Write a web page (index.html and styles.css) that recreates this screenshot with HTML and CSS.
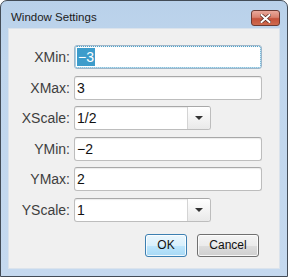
FILE: index.html
```html
<!DOCTYPE html>
<html lang="en">
<head>
    <meta charset="utf-8">
    <title>Window Settings</title>
    <link rel="stylesheet" href="styles.css">
</head>
<body>
    <div class="window">
        <div class="titlebar">
            <span class="title">Window Settings</span>
            <div class="close">
                <svg width="11" height="9" viewBox="0 0 11 9">
                    <path d="M1.5 1 L9.5 8 M9.5 1 L1.5 8" stroke="#5a2a22" stroke-width="3.4" stroke-linecap="square"/>
                    <path d="M1.5 1 L9.5 8 M9.5 1 L1.5 8" stroke="#fff" stroke-width="2" stroke-linecap="square"/>
                </svg>
            </div>
        </div>
        <div class="client">
            <div class="form">
                <label>XMin:</label>
                <div class="field focus"><span class="sel">&minus;3</span></div>

                <label>XMax:</label>
                <div class="field">3</div>

                <label>XScale:</label>
                <div class="combo">
                    <span class="value">1/2</span>
                    <span class="drop"><i class="arrow"></i></span>
                </div>

                <label>YMin:</label>
                <div class="field">&minus;2</div>

                <label>YMax:</label>
                <div class="field">2</div>

                <label>YScale:</label>
                <div class="combo">
                    <span class="value">1</span>
                    <span class="drop"><i class="arrow"></i></span>
                </div>
            </div>
            <div class="buttons">
                <button type="button" class="btn ok">OK</button>
                <button type="button" class="btn">Cancel</button>
            </div>
        </div>
    </div>
</body>
</html>
```

FILE: styles.css
```css
body {
    margin: 0;
    font-family: "Liberation Sans", Arial, sans-serif;
}

.window {
    width: 288px;
    height: 277px;
    box-sizing: border-box;
    border: 1px solid #434c57;
    border-radius: 7px 7px 0 0;
    background: linear-gradient(#b9d1ea, #c0d6ed 60px, #c5d9ef);
    padding: 0 7px 7px;
    display: flex;
    flex-direction: column;
}

.titlebar {
    height: 27px;
    flex: none;
    display: flex;
    justify-content: space-between;
    align-items: flex-start;
}

.title {
    margin: 10px 0 0 3px;
    font-size: 11.5px;
    color: #1b1b1b;
}

.close {
    width: 27px;
    height: 14px;
    margin: 9px 0 0;
    border: 1px solid #6b3a33;
    border-radius: 3px;
    background: linear-gradient(#e9a99c, #d9826f 45%, #c4523b 55%, #cf6b4f);
    display: flex;
    justify-content: center;
    align-items: center;
}

.client {
    flex: 1;
    background: #f0f0f0;
    border: 1px solid #dbe3ec;
}

.form {
    display: grid;
    grid-template-columns: 61px 188px;
    column-gap: 4px;
    row-gap: 6.6px;
    padding-top: 16px;
    font-size: 14px;
}

.form label {
    text-align: right;
    color: #3e3e3e;
    line-height: 24px;
}

.field, .combo {
    height: 24px;
    box-sizing: border-box;
    border: 1px solid #bdbdbd;
    border-top-color: #a8a8a8;
    border-radius: 3px;
    background: #fff;
    box-shadow: inset 0 1px 1px rgba(0, 0, 0, 0.08);
    color: #111;
    line-height: 22px;
    padding-left: 2px;
}

.focus {
    outline: 1px dotted #4aa3cf;
    outline-offset: -2px;
    border-color: #9eb6c9;
}

.sel {
    display: inline-block;
    background: #3d9ccb;
    color: #fff;
    line-height: 18px;
    padding: 0 1px;
    margin-top: 2px;
}

.combo {
    width: 137px;
    display: flex;
    padding-left: 0;
}

.combo .value {
    flex: 1;
    padding-left: 2px;
}

.drop {
    width: 22px;
    border-left: 1px solid #d4d4d4;
    background: linear-gradient(#ffffff, #f4f4f4 50%, #e9e9e9);
    border-radius: 0 2px 2px 0;
    display: flex;
    justify-content: center;
    align-items: center;
}

.arrow {
    width: 0;
    height: 0;
    border-left: 4px solid transparent;
    border-right: 4px solid transparent;
    border-top: 4px solid #333;
}

.buttons {
    display: flex;
    justify-content: flex-end;
    gap: 10px;
    padding: 12px 20px 0 0;
}

.btn {
    height: 23px;
    width: 62px;
    box-sizing: border-box;
    margin: 0;
    padding: 0;
    border: 1px solid #707070;
    border-radius: 3px;
    background: linear-gradient(#f4f4f4, #ebebeb 50%, #dddddd 51%, #cfcfcf);
    box-shadow: inset 0 0 0 1px rgba(255, 255, 255, 0.8);
    font: 12px "Liberation Sans", Arial, sans-serif;
    color: #111;
}

.btn.ok {
    width: 42px;
    border-color: #3c7fb1;
    background: linear-gradient(#eaf6fd, #d9f0fc 50%, #bee6fd 51%, #a7d9f5);
}
```
